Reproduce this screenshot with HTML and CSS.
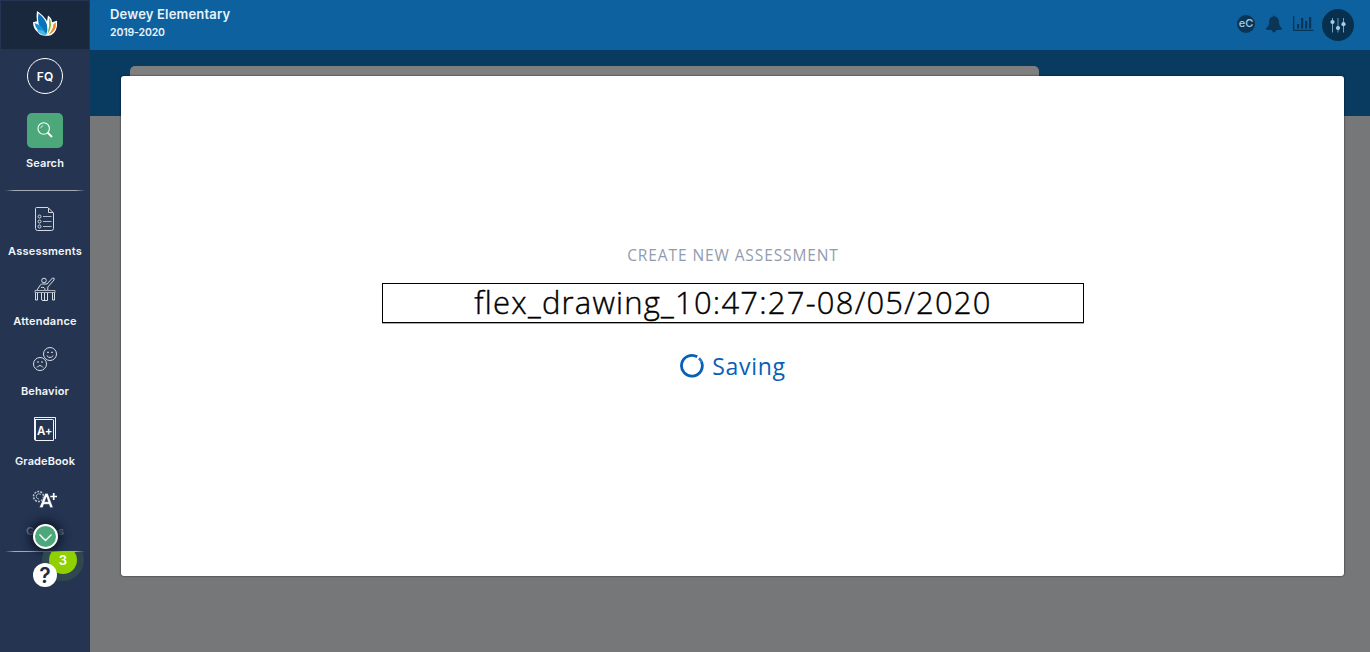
FILE: index.html
```html
<!DOCTYPE html>
<html lang="en">
<head>
<meta charset="utf-8">
<title>Create New Assessment</title>
<link rel="stylesheet" href="styles.css">
</head>
<body>
<div class="app">
  <nav class="sidebar">
    <div class="logo">
      <svg width="26" height="28" viewBox="0 0 26 30" preserveAspectRatio="none">
        <path d="M5 1 Q12 6 15 12 L16 6 Q20 9 20 13 L25 11.500 Q26 23 19 27 Q9 29 6 24 Q1 20 1 13 L5 12 Q4 7 5 1Z" fill="#fff"/>
        <path d="M6.500 3.500 Q13 9 15 16 Q16 22 14.500 26 Q4 18 6.500 3.500Z" fill="#0873bd"/>
        <path d="M2.500 14 Q10.500 16 14 26 Q4 24 2.500 14Z" fill="#1b92d4"/>
        <path d="M5 22 Q11 20 14.500 26.500 Q9 28 5 22Z" fill="#45b9e7"/>
        <path d="M17 8 Q22 16 15.500 26 Q18 17 17 8Z" fill="#7bb83c"/>
        <path d="M23.800 13.500 Q25 23 16.500 26.500 Q21 21 21.500 15Z" fill="#f28c28"/>
      </svg>
    </div>
    <div class="avatar">FQ</div>
    <div class="search-button">
      <svg width="18" height="18" viewBox="0 0 18 18" fill="none" stroke="#fff">
        <circle cx="7.700" cy="7.500" r="5.700" stroke-width="1.100"/>
        <path d="M4.800 7.200 Q5 4.900 7.200 4.600" stroke-width=".7"/>
        <path d="M11.500 11.500 L16 16" stroke-width="1.800"/>
      </svg>
    </div>
    <div class="label search-label">Search</div>
    <div class="divider"></div>
    <div class="menu">
      <div class="item">
        <svg width="26" height="26" viewBox="1 0 26 26" fill="none" stroke="#d4dae3" stroke-width="1">
          <path d="M5.500 1.500 H17 L22.500 7 V22.500 Q22.500 24.500 20.500 24.500 H6.500 Q4.500 24.500 4.500 22.500 V2.500 Q4.500 1.500 5.500 1.500Z M17.500 2 V6.500 H22"/>
          <path d="M12 10.500H20.500M12 15.500H20.500M12 20.500H20.500" stroke-opacity=".8"/>
          <circle cx="8.500" cy="10.500" r="1.500"/><circle cx="8.500" cy="15.500" r="1.500"/><circle cx="8.500" cy="20.500" r="1.500"/>
        </svg>
        <div class="label l-assess">Assessments</div>
      </div>
      <div class="item">
        <svg width="26" height="26" viewBox="1 0 26 26" fill="none" stroke="#d9dfe7" stroke-width="1">
          <circle cx="13" cy="4.500" r="2.300"/>
          <path d="M6 14 L9.500 8.700 Q10 8 11.500 8 L16 8 L21.500 2 Q24 1.500 23 4 L16.800 11 V14 M10 11.500 Q14 10.500 14 14"/>
          <path d="M4 14.500 H24 V16.500 H4Z" stroke-opacity=".75"/>
          <path d="M4.500 17 V24 H6.500 V17 M21.500 17 V24 H23.500 V17 M10.500 17 V23 Q10.500 24.500 12 24.500 H16.500 V17 M13.500 17 V24"/>
        </svg>
        <div class="label l-attend">Attendance</div>
      </div>
      <div class="item">
        <svg width="26" height="26" viewBox="0 0 26 26" fill="none" stroke="#d9dfe7" stroke-width="1">
          <circle cx="18" cy="8" r="6.500"/><circle cx="8" cy="18" r="6.500"/>
          <path d="M14.700 9.500 Q18 13.500 21.300 9.500 M15 6.300 H17 M19 6.300 H21 M5 21.500 Q8 17.500 11 21.500 M5 16 H7 M9 16 H11"/>
        </svg>
        <div class="label l-behave">Behavior</div>
      </div>
      <div class="item">
        <svg width="26" height="26" viewBox="1 0 26 26">
          <path d="M3.500 1.500 H24.500 V23 M3.500 1.500 V23 Q3.500 24.500 5 24.500 H22.500 V4 Q22.500 3.500 21.500 3.500 H4 M4.500 4 V24" fill="none" stroke="#f0f3f6"/>
          <text x="6" y="19" class="book-glyph">A+</text>
        </svg>
        <div class="label l-book">GradeBook</div>
      </div>
      <div class="item">
        <svg width="26" height="26" viewBox="0 -1 26 26">
          <circle cx="6.500" cy="9.500" r="5" fill="none" stroke="#b9c2cf" stroke-width="1.500" stroke-dasharray="2 1.100"/>
          <path d="M9 7.500 Q6.500 5.500 4.500 8 Q3.500 11.500 7 12" fill="none" stroke="#c9d0da" stroke-width=".8"/>
          <path d="M7.500 20.500 L13.200 6.500 H15.800 L21 20.500 H18.100 L17 17.300 H11.900 L10.700 20.500Z M12.700 14.800 H16.100 L14.500 10Z" fill="#fff" stroke="#243451" stroke-width=".3" fill-rule="evenodd"/>
          <path d="M18.300 9.500 H25 M21.700 6 V13" stroke="#fff" stroke-width="1.700"/>
        </svg>
        <div class="label l-grades">Grades</div>
      </div>
      <div class="scroll-cue">
        <svg width="21" height="22" viewBox="0 0 21 22"><path d="M4.500 8.500 L10.500 14.500 L16.500 8.500" fill="none" stroke="#fff" stroke-width="1.400"/></svg>
      </div>
    </div>
    <div class="divider"></div>
    <div class="help">
      <span class="badge">3</span>
      <span class="question">?</span>
    </div>
  </nav>
  <main class="main">
    <header class="topbar">
      <div class="school">
        <div class="school-name">Dewey Elementary</div>
        <div class="school-year">2019-2020</div>
      </div>
      <div class="tools">
        <span class="ec">eC</span>
        <svg class="bell" width="18" height="18" viewBox="0 0 18 18" fill="#0a3557"><path d="M8 1.500 Q9 -.5 10 1.500 Q14 2.500 14 7 Q14 12 17 13 Q17 15 15.500 15 H11.500 Q9 20 6.500 15 H2.500 Q1 15 1 13 Q4 12 4 7 Q4 2.500 8 1.500Z"/></svg>
        <svg class="chart" width="21" height="17" viewBox="0 0 21 17" fill="#0a3557"><path d="M0 1H1.300V14.700H20.500V16H0Z M4 9H6.200V13.500H4Z M8 3H10.200V13.500H8Z M12 6H14.200V13.500H12Z M16 2H18.200V13.500H16Z"/></svg>
        <span class="settings">
          <svg width="16" height="16" viewBox="0 0 16 16"><path d="M2.500 1V15.500M13.500 1V15.500" stroke="#73a0bf"/><path d="M8 1V15.500" stroke="#3f6783" stroke-width="1.800"/><g fill="#a7cbe4"><circle cx="2.500" cy="5" r="2.100"/><circle cx="8" cy="11" r="2.100"/><circle cx="13.500" cy="7.200" r="2.100"/></g></svg>
        </span>
      </div>
    </header>
    <div class="banner"><div class="tab-panel"></div></div>
    <section class="modal">
      <div class="modal-title">CREATE NEW ASSESSMENT</div>
      <div class="name-field"><span>flex_drawing_10:47:27-08/05/2020</span></div>
      <div class="saving">
        <svg width="26" height="26" viewBox="0 0 26 26" fill="none" stroke="#075fb8" stroke-width="2.800"><path d="M18.200 3.800 A10.400 10.400 0 1 0 22.400 8.500"/><path d="M20 5.300 A10.400 10.400 0 0 1 22.400 8.500" stroke-opacity=".85"/></svg>
        <span>Saving</span>
      </div>
    </section>
  </main>
</div>
</body>
</html>
```
FILE: styles.css
```css
* { box-sizing: border-box; }
body { margin: 0; font-family: Inter, "Liberation Sans", sans-serif; overflow: hidden; }
svg { display: block; flex: none; }
.app { display: flex; width: 1370px; height: 652px; }
.sidebar { width: 90px; flex: none; background: #243451; display: flex; flex-direction: column; align-items: center; color: #fff; }
.logo { width: 90px; height: 50px; border: 1px solid #243451; background: #1a283e; display: flex; align-items: center; justify-content: center; padding-bottom: 2px; }
.avatar { width: 36px; height: 36px; margin-top: 8px; border: 1px solid #fff; border-radius: 50%; font-size: 12px; font-weight: 600; line-height: 35px; text-align: center; }
.search-button { width: 36px; height: 35px; margin-top: 19px; border-radius: 5px; background: #4ca77a; display: flex; align-items: center; justify-content: center; padding-bottom: 2px; }
.label { height: 14px; line-height: 14px; font-size: 11px; font-weight: 600; white-space: nowrap; color: #f4f6f8; }
.search-label { margin-top: 8px; letter-spacing: .1px; }
.divider { width: 80px; height: 1px; flex: none; background: linear-gradient(90deg, transparent, #a7abb9 12%, #a7abb9 88%, transparent); }
.search-label + .divider { margin-top: 20px; }
.menu { position: relative; width: 90px; height: 360px; padding-top: 15px; display: flex; flex-direction: column; }
.item { height: 70px; display: flex; flex-direction: column; align-items: center; gap: 12px; flex: none; }
.l-assess { letter-spacing: .2px; }
.l-attend { letter-spacing: .25px; }
.l-behave { letter-spacing: .15px; }
.l-book { letter-spacing: .1px; }
.l-grades { opacity: .4; }
.book-glyph { font: 600 11.500px Inter, sans-serif; fill: #fff; letter-spacing: -.3px; }
.scroll-cue { position: absolute; left: 33px; bottom: 2px; width: 25px; height: 25px; border: 2px solid #fff; border-radius: 50%; background: #4ca77a; box-shadow: 0 0 9px 4px #101a2c; display: flex; align-items: center; justify-content: center; }
.help { position: relative; width: 90px; height: 100px; padding-top: 11px; overflow: hidden; display: flex; justify-content: center; align-items: flex-start; }
.badge { position: absolute; left: 49px; top: -6px; width: 28px; height: 28px; border-radius: 50%; background: #91d000; box-shadow: 0 0 0 7px #2f484d; font-size: 13px; font-weight: 600; line-height: 28px; text-align: center; }
.question { position: relative; width: 24px; height: 24px; border-radius: 50%; background: #fff; color: #1d2b43; font-size: 21px; font-weight: 600; line-height: 25px; text-align: center; }
.main { position: relative; flex: 1; background: #767779; }
.topbar { height: 50px; background: #0d619f; display: flex; justify-content: space-between; padding: 0 16px 0 20px; }
.school { padding-top: 5px; color: #e9f2f8; font-weight: 600; }
.school-name { height: 19px; font-size: 13px; line-height: 19px; letter-spacing: .18px; }
.school-year { height: 16px; font-size: 10.500px; line-height: 17px; letter-spacing: -.15px; }
.tools { display: flex; align-items: center; }
.ec { width: 18px; height: 18px; border-radius: 50%; background: #0a3557; color: #a7cbe4; font-size: 11px; font-weight: 500; line-height: 17px; text-align: center; margin: 0 10px 2px 0; }
.bell { margin: 0 10px 2px 0; }
.chart { margin: 0 8px 3px 0; }
.settings { width: 32px; height: 32px; border-radius: 50%; background: #06304d; display: flex; align-items: center; justify-content: center; margin-bottom: 1px; }
.banner { height: 66px; background: #093a5f; padding: 16px 0 0 40px; }
.tab-panel { width: 909px; height: 50px; background: #7f7f7f; border-radius: 5px 5px 0 0; }
.modal { position: absolute; left: 31px; top: 76px; width: 1223px; height: 500px; border-radius: 3px; background: #fff; box-shadow: 0 0 2px rgba(0,0,0,.8); display: flex; flex-direction: column; align-items: center; padding-top: 168px; font-family: "Open Sans", "Noto Sans", sans-serif; }
.modal-title { height: 22px; line-height: 22px; font-size: 15.500px; color: #929bad; letter-spacing: .9px; margin-right: -1px; white-space: nowrap; }
.name-field { width: 702px; height: 40px; margin-top: 17px; margin-left: 1px; border: 1px solid #000; box-shadow: 0 1px 0 #aaa; text-align: center; font-size: 31px; line-height: 37px; font-weight: 300; letter-spacing: 1.210px; -webkit-text-stroke: .4px #000; color: #000; white-space: nowrap; }
.saving { display: flex; align-items: center; gap: 7px; height: 34px; margin-top: 26px; color: #075fb8; font-size: 23px; line-height: 34px; letter-spacing: .7px; }
```
